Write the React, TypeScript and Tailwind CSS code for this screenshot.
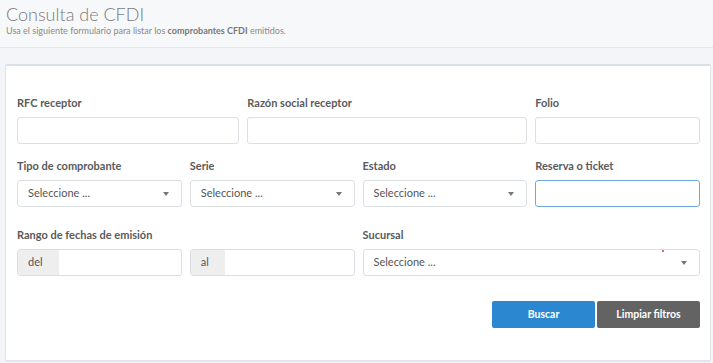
const font = { fontFamily: 'Lato, "Open Sans", sans-serif' };

function Label({ children }: { children: React.ReactNode }) {
  return <label className="block h-[14px] text-[11px] leading-[14px] font-bold text-[#5a5a5a]">{children}</label>;
}

function TextInput({ focus }: { focus?: boolean }) {
  return (
    <div
      className={`h-[27px] rounded-[3px] border bg-white ${
        focus ? 'border-[#6fa9e0]' : 'border-[#dcdfe3]'
      }`}
    />
  );
}

function SelectBox() {
  return (
    <div className="flex h-[27px] items-center justify-between rounded-[3px] border border-[#dcdfe3] bg-white pl-[10px] pr-[12px]">
      <span className="text-[11px] text-[#555]">Seleccione ...</span>
      <span className="h-0 w-0 border-x-[3px] border-t-[4px] border-x-transparent border-t-[#777]" />
    </div>
  );
}

function AddonInput({ addon, width }: { addon: string; width: string }) {
  return (
    <div className="flex h-[27px] rounded-[3px] border border-[#dcdfe3] bg-white">
      <span className={`flex items-center bg-[#eeeeee] pl-[10px] text-[11px] text-[#555] ${width}`}>{addon}</span>
      <span className="flex-1" />
    </div>
  );
}

export default function App() {
  return (
    <div className="min-h-[363px] bg-[#f4f5f8]" style={font}>
      <header className="h-[48px] border-b border-[#e2e5ea] bg-[#f7f8fa] px-[6px] pt-[3px]">
        <h1 className="text-[18px] font-light leading-[22px] text-[#7a7a7a]">Consulta de CFDI</h1>
        <p className="text-[9px] leading-[12px] text-[#8a8a8a]">
          Usa el siguiente formulario para listar los <b className="font-bold text-[#777]">comprobantes CFDI</b> emitidos.
        </p>
      </header>

      <div className="pl-[5px] pr-[2px] pt-[16px]">
        <section className="relative rounded-[2px] border border-[#e1e4e9] border-t-2 border-t-[#d9e0ea] bg-white pl-[11px] pr-[10px] pb-[32px] pt-[30px] shadow-[0_1px_1px_rgba(0,0,0,0.05)]">
          <div className="grid grid-cols-12 gap-x-2">
            <div className="col-span-4 flex flex-col gap-[7px]">
              <Label>RFC receptor</Label>
              <TextInput />
            </div>
            <div className="col-span-5 flex flex-col gap-[7px]">
              <Label>Razón social receptor</Label>
              <TextInput />
            </div>
            <div className="col-span-3 flex flex-col gap-[7px]">
              <Label>Folio</Label>
              <TextInput />
            </div>
          </div>

          <div className="mt-[15px] grid grid-cols-12 gap-x-2">
            <div className="col-span-3 flex flex-col gap-[7px]">
              <Label>Tipo de comprobante</Label>
              <SelectBox />
            </div>
            <div className="col-span-3 flex flex-col gap-[7px]">
              <Label>Serie</Label>
              <SelectBox />
            </div>
            <div className="col-span-3 flex flex-col gap-[7px]">
              <Label>Estado</Label>
              <SelectBox />
            </div>
            <div className="col-span-3 flex flex-col gap-[7px]">
              <Label>Reserva o ticket</Label>
              <TextInput focus />
            </div>
          </div>

          <div className="mt-[21px] grid grid-cols-12 gap-x-2">
            <div className="col-span-6 flex flex-col gap-[7px]">
              <Label>Rango de fechas de emisión</Label>
              <div className="grid grid-cols-2 gap-x-2">
                <AddonInput addon="del" width="w-[41px]" />
                <AddonInput addon="al" width="w-[34px]" />
              </div>
            </div>
            <div className="col-span-6 flex flex-col gap-[7px]">
              <Label>Sucursal</Label>
              <SelectBox />
            </div>
          </div>

          <div className="mt-[25px] flex justify-end gap-[2px]">
            <button className="h-[27px] w-[103px] rounded-[2px] bg-[#2b88d0] text-[10.5px] font-bold text-white">Buscar</button>
            <button className="h-[27px] w-[103px] rounded-[2px] bg-[#636363] text-[10.5px] font-bold text-white">Limpiar filtros</button>
          </div>

          <span className="absolute left-[656px] top-[184px] h-[2px] w-[2px] rounded-full bg-[#e53935]" />
        </section>
      </div>
    </div>
  );
}
